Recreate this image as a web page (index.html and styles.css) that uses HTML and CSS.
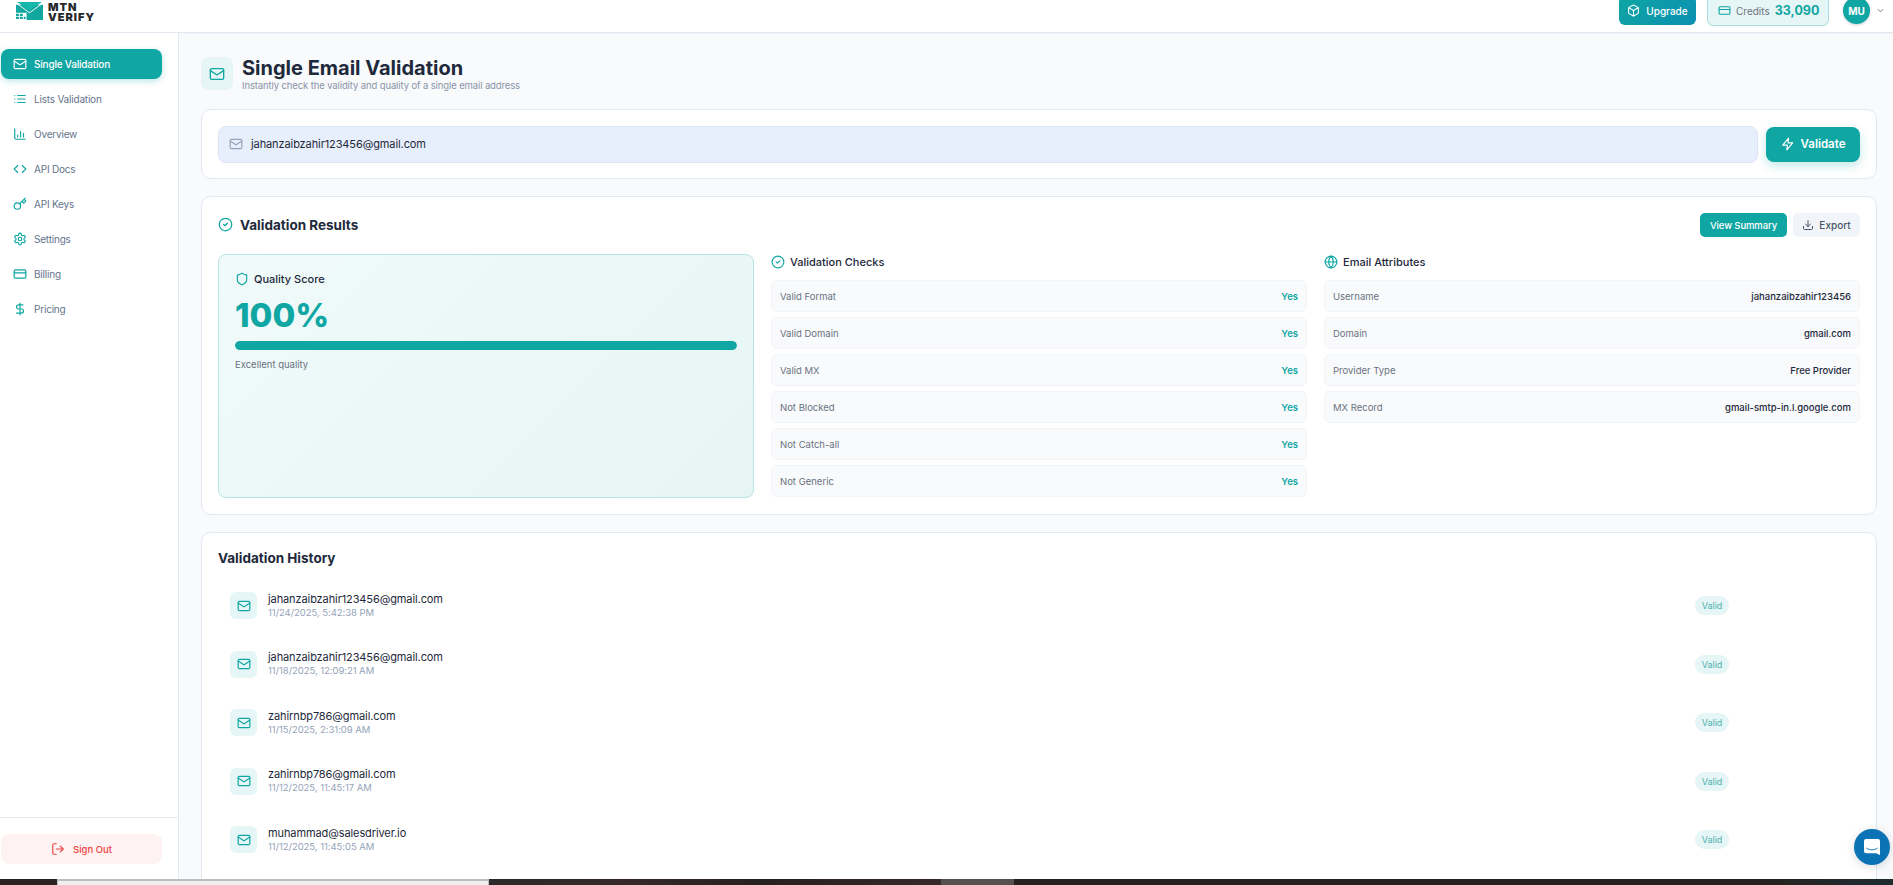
FILE: index.html
```html
<!DOCTYPE html>
<html lang="en">
<head>
    <meta charset="UTF-8">
    <meta name="viewport" content="width=device-width, initial-scale=1.0">
    <title>MTN Verify - Single Email Validation</title>
    <link rel="stylesheet" href="styles.css">
</head>
<body>
    <svg width="0" height="0" class="sprite">
        <symbol id="i-mail" viewBox="0 0 24 24"><rect x="2" y="4" width="20" height="16" rx="2"/><path d="m22 7-8.97 5.7a1.94 1.94 0 0 1-2.06 0L2 7"/></symbol>
        <symbol id="i-check" viewBox="0 0 24 24"><circle cx="12" cy="12" r="10"/><path d="m9 12 2 2 4-4"/></symbol>
        <symbol id="i-card" viewBox="0 0 24 24"><rect x="2" y="5" width="20" height="14" rx="2"/><path d="M2 10h20"/></symbol>
    </svg>

    <div class="app">
        <header class="topbar">
            <div class="logo">
                <svg class="logo-mark" viewBox="0 0 28 20" preserveAspectRatio="none">
                    <path class="logo-body" d="M0 3h28v17H11v-8H0z"/>
                    <path class="logo-flap" d="M1 0h26L14 9z"/>
                    <path class="logo-fold" d="M0 1l14 11L28 1"/>
                    <path class="logo-grid" d="M0 13h3v2.500H0zM4 13h3v2.500H4zM0 16.500h3V19H0zM4 16.500h3V19H4zM8 16.500h2V19H8z"/>
                </svg>
                <div class="logo-text">MTN<br>VERIFY</div>
            </div>
            <div class="topbar-right">
                <button class="upgrade-btn">
                    <svg class="icon icon-13" viewBox="0 0 24 24"><path d="M21 8a2 2 0 0 0-1-1.730l-7-4a2 2 0 0 0-2 0l-7 4A2 2 0 0 0 3 8v8a2 2 0 0 0 1 1.730l7 4a2 2 0 0 0 2 0l7-4A2 2 0 0 0 21 16Z"/><path d="m3.300 7 8.700 5 8.700-5"/><path d="M12 22V12"/></svg>
                    Upgrade
                </button>
                <div class="credits">
                    <svg class="icon icon-13 teal"><use href="#i-card"/></svg>
                    <span class="credits-label">Credits</span>
                    <span class="credits-value">33,090</span>
                </div>
                <div class="avatar">MU</div>
                <svg class="chevron" viewBox="0 0 24 24"><path d="m6 9 6 6 6-6"/></svg>
            </div>
        </header>

        <div class="body-row">
            <aside class="sidebar">
                <nav class="nav">
                    <a class="nav-item active"><svg class="icon icon-14"><use href="#i-mail"/></svg>Single Validation</a>
                    <a class="nav-item"><svg class="icon icon-14 teal" viewBox="0 0 24 24"><path d="M8 6h13M8 12h13M8 18h13M3 6h.01M3 12h.01M3 18h.01"/></svg>Lists Validation</a>
                    <a class="nav-item"><svg class="icon icon-14 teal" viewBox="0 0 24 24"><path d="M3 3v16a2 2 0 0 0 2 2h16M8 17v-3M13 17V8M18 17v-6"/></svg>Overview</a>
                    <a class="nav-item"><svg class="icon icon-14 teal" viewBox="0 0 24 24"><path d="m16 18 6-6-6-6M8 6l-6 6 6 6"/></svg>API Docs</a>
                    <a class="nav-item"><svg class="icon icon-14 teal" viewBox="0 0 24 24"><circle cx="7.500" cy="15.500" r="5.500"/><path d="m21 2-9.600 9.600M15.500 7.500l3 3L22 7l-3-3"/></svg>API Keys</a>
                    <a class="nav-item"><svg class="icon icon-14 teal" viewBox="0 0 24 24"><path d="M12.220 2h-.44a2 2 0 0 0-2 2v.18a2 2 0 0 1-1 1.730l-.43.250a2 2 0 0 1-2 0l-.15-.08a2 2 0 0 0-2.730.730l-.22.380a2 2 0 0 0 .730 2.730l.15.100a2 2 0 0 1 1 1.720v.510a2 2 0 0 1-1 1.740l-.15.090a2 2 0 0 0-.730 2.730l.22.380a2 2 0 0 0 2.730.730l.15-.08a2 2 0 0 1 2 0l.43.250a2 2 0 0 1 1 1.730V20a2 2 0 0 0 2 2h.44a2 2 0 0 0 2-2v-.18a2 2 0 0 1 1-1.730l.43-.250a2 2 0 0 1 2 0l.15.080a2 2 0 0 0 2.730-.730l.22-.390a2 2 0 0 0-.730-2.730l-.15-.080a2 2 0 0 1-1-1.740v-.500a2 2 0 0 1 1-1.740l.15-.090a2 2 0 0 0 .730-2.730l-.22-.380a2 2 0 0 0-2.730-.730l-.15.080a2 2 0 0 1-2 0l-.43-.250a2 2 0 0 1-1-1.730V4a2 2 0 0 0-2-2z"/><circle cx="12" cy="12" r="3"/></svg>Settings</a>
                    <a class="nav-item"><svg class="icon icon-14 teal"><use href="#i-card"/></svg>Billing</a>
                    <a class="nav-item"><svg class="icon icon-14 teal" viewBox="0 0 24 24"><path d="M12 2v20M17 5H9.500a3.500 3.500 0 0 0 0 7h5a3.500 3.500 0 0 1 0 7H6"/></svg>Pricing</a>
                </nav>
                <div class="sidebar-foot">
                    <button class="signout-btn">
                        <svg class="icon icon-14" viewBox="0 0 24 24"><path d="M9 21H5a2 2 0 0 1-2-2V5a2 2 0 0 1 2-2h4M16 17l5-5-5-5M21 12H9"/></svg>
                        Sign Out
                    </button>
                </div>
            </aside>

            <main class="main">
                <div class="page-head">
                    <div class="page-icon"><svg class="icon icon-16 teal"><use href="#i-mail"/></svg></div>
                    <div>
                        <h1>Single Email Validation</h1>
                        <p class="subtitle">Instantly check the validity and quality of a single email address</p>
                    </div>
                </div>

                <section class="card input-card">
                    <div class="email-input">
                        <svg class="icon icon-14 muted"><use href="#i-mail"/></svg>
                        <span>jahanzaibzahir123456@gmail.com</span>
                    </div>
                    <button class="validate-btn">
                        <svg class="icon icon-14" viewBox="0 0 24 24"><path d="M13 2 3 14h8l-1 8 10-12h-8z"/></svg>
                        Validate
                    </button>
                </section>

                <section class="card results-card">
                    <div class="results-head">
                        <h2><svg class="icon icon-15 teal"><use href="#i-check"/></svg>Validation Results</h2>
                        <div class="results-actions">
                            <button class="summary-btn">View Summary</button>
                            <button class="export-btn">
                                <svg class="icon icon-12" viewBox="0 0 24 24"><path d="M21 15v4a2 2 0 0 1-2 2H5a2 2 0 0 1-2-2v-4M7 10l5 5 5-5M12 15V3"/></svg>
                                Export
                            </button>
                        </div>
                    </div>
                    <div class="results-grid">
                        <div class="score-box">
                            <div class="score-label">
                                <svg class="icon icon-14 teal" viewBox="0 0 24 24"><path d="M20 13c0 5-3.500 7.500-7.660 8.950a1 1 0 0 1-.67-.010C7.500 20.500 4 18 4 13V6a1 1 0 0 1 1-1c2 0 4.500-1.200 6.240-2.720a1.170 1.170 0 0 1 1.520 0C14.510 3.810 17 5 19 5a1 1 0 0 1 1 1z"/></svg>
                                Quality Score
                            </div>
                            <div class="score-value">100%</div>
                            <div class="score-bar"><div class="score-fill" style="width: 100%"></div></div>
                            <div class="score-note">Excellent quality</div>
                        </div>
                        <div class="col">
                            <h3><svg class="icon icon-14 teal"><use href="#i-check"/></svg>Validation Checks</h3>
                            <div class="row"><span>Valid Format</span><b class="yes">Yes</b></div>
                            <div class="row"><span>Valid Domain</span><b class="yes">Yes</b></div>
                            <div class="row"><span>Valid MX</span><b class="yes">Yes</b></div>
                            <div class="row"><span>Not Blocked</span><b class="yes">Yes</b></div>
                            <div class="row"><span>Not Catch-all</span><b class="yes">Yes</b></div>
                            <div class="row"><span>Not Generic</span><b class="yes">Yes</b></div>
                        </div>
                        <div class="col">
                            <h3><svg class="icon icon-14 teal" viewBox="0 0 24 24"><circle cx="12" cy="12" r="10"/><path d="M12 2a14.500 14.500 0 0 0 0 20 14.500 14.500 0 0 0 0-20M2 12h20"/></svg>Email Attributes</h3>
                            <div class="row"><span>Username</span><b>jahanzaibzahir123456</b></div>
                            <div class="row"><span>Domain</span><b>gmail.com</b></div>
                            <div class="row"><span>Provider Type</span><b>Free Provider</b></div>
                            <div class="row"><span>MX Record</span><b>gmail-smtp-in.l.google.com</b></div>
                        </div>
                    </div>
                </section>

                <section class="card history-card">
                    <h2>Validation History</h2>
                    <div class="history-item">
                        <div class="history-icon"><svg class="icon icon-14 teal"><use href="#i-mail"/></svg></div>
                        <div class="history-text"><div class="history-email">jahanzaibzahir123456@gmail.com</div><div class="history-date">11/24/2025, 5:42:38 PM</div></div>
                        <span class="badge">Valid</span>
                    </div>
                    <div class="history-item">
                        <div class="history-icon"><svg class="icon icon-14 teal"><use href="#i-mail"/></svg></div>
                        <div class="history-text"><div class="history-email">jahanzaibzahir123456@gmail.com</div><div class="history-date">11/18/2025, 12:09:21 AM</div></div>
                        <span class="badge">Valid</span>
                    </div>
                    <div class="history-item">
                        <div class="history-icon"><svg class="icon icon-14 teal"><use href="#i-mail"/></svg></div>
                        <div class="history-text"><div class="history-email">zahirnbp786@gmail.com</div><div class="history-date">11/15/2025, 2:31:09 AM</div></div>
                        <span class="badge">Valid</span>
                    </div>
                    <div class="history-item">
                        <div class="history-icon"><svg class="icon icon-14 teal"><use href="#i-mail"/></svg></div>
                        <div class="history-text"><div class="history-email">zahirnbp786@gmail.com</div><div class="history-date">11/12/2025, 11:45:17 AM</div></div>
                        <span class="badge">Valid</span>
                    </div>
                    <div class="history-item">
                        <div class="history-icon"><svg class="icon icon-14 teal"><use href="#i-mail"/></svg></div>
                        <div class="history-text"><div class="history-email">muhammad@salesdriver.io</div><div class="history-date">11/12/2025, 11:45:05 AM</div></div>
                        <span class="badge">Valid</span>
                    </div>
                </section>
            </main>
        </div>
    </div>

    <button class="chat-btn">
        <svg viewBox="0 0 24 24"><path fill="#fff" d="M3 0h18a3 3 0 0 1 3 3v21l-6-2.500H3a3 3 0 0 1-3-3V3a3 3 0 0 1 3-3z"/><path d="M4 14c4.500 3 11.500 3 16 0" fill="none" stroke="#0b73b5" stroke-width="1.400" stroke-linecap="round"/></svg>
    </button>

    <div class="taskstrip">
        <span class="strip-a"></span>
        <span class="strip-b"></span>
        <span class="strip-c"></span>
        <span class="strip-d"></span>
        <span class="strip-e"></span>
    </div>
</body>
</html>
```

FILE: styles.css
```css
* {
    margin: 0;
    padding: 0;
    box-sizing: border-box;
}

html, body {
    height: 885px;
    overflow: hidden;
}

body {
    display: flex;
    flex-direction: column;
    background: #f8fafc;
    color: #1e293b;
    font-family: 'Inter', 'Liberation Sans', sans-serif;
}

button {
    font-family: inherit;
    border: none;
    cursor: pointer;
}

.sprite {
    position: absolute;
}

.app {
    height: 879px;
    overflow: hidden;
    display: flex;
    flex-direction: column;
}

.icon {
    fill: none;
    stroke: currentColor;
    stroke-width: 2;
    stroke-linecap: round;
    stroke-linejoin: round;
    flex-shrink: 0;
}

.icon-12 { width: 12px; height: 12px; }
.icon-13 { width: 13px; height: 13px; }
.icon-14 { width: 14px; height: 14px; }
.icon-15 { width: 15px; height: 15px; }
.icon-16 { width: 16px; height: 16px; }
.teal { color: #0fa6a3; }
.muted { color: #94a3b8; }

/* top bar, scrolled a little off the top of the window */
.topbar {
    flex-shrink: 0;
    height: 44px;
    margin-top: -11px;
    background: #fff;
    border-bottom: 1px solid #e2e8f0;
    box-shadow: 0 1px 2px rgba(15, 23, 42, 0.04);
    display: flex;
    align-items: center;
    justify-content: space-between;
    padding: 0 7px 0 16px;
}

.logo {
    display: flex;
    align-items: center;
    gap: 5px;
}

.logo-mark {
    width: 27px;
    height: 18px;
}

.logo-body { fill: #12a8a0; }
.logo-flap { fill: #14b8ad; }
.logo-fold { fill: none; stroke: #fff; stroke-width: 1; }
.logo-grid { fill: #12a8a0; }

.logo-text {
    font-size: 11px;
    line-height: 10px;
    letter-spacing: 1px;
    font-weight: 900;
    color: #26282c;
    margin-top: 3px;
}

.topbar-right {
    display: flex;
    align-items: center;
}

.upgrade-btn {
    height: 29px;
    width: 77px;
    border-radius: 6px;
    background: linear-gradient(135deg, #0fa6a3, #0b8fb0);
    color: #fff;
    font-size: 10px;
    font-weight: 500;
    display: flex;
    align-items: center;
    justify-content: center;
    gap: 6px;
    margin-right: 11px;
}

.credits {
    height: 31px;
    width: 122px;
    background: #e6f5f5;
    border: 1px solid #a8e0dd;
    border-radius: 6px;
    display: flex;
    align-items: center;
    padding-left: 10px;
    margin-right: 14px;
}

.credits-label {
    font-size: 10px;
    color: #6b7280;
    margin-left: 5px;
}

.credits-value {
    font-size: 12.500px;
    font-weight: 700;
    color: #0fa6a3;
    margin-left: 5px;
}

.avatar {
    width: 27px;
    height: 27px;
    border-radius: 50%;
    background: #0fa6a3;
    color: #fff;
    font-size: 10px;
    font-weight: 700;
    display: flex;
    align-items: center;
    justify-content: center;
    box-shadow: 0 1px 3px rgba(15, 23, 42, 0.2);
}

.chevron {
    width: 11px;
    height: 11px;
    margin-left: 5px;
    fill: none;
    stroke: #64748b;
    stroke-width: 2;
}

.body-row {
    flex: 1;
    min-height: 0;
    display: flex;
}

/* sidebar */
.sidebar {
    width: 179px;
    flex-shrink: 0;
    background: #fff;
    border-right: 1px solid #e2e8f0;
    display: flex;
    flex-direction: column;
}

.nav {
    flex: 1;
    padding: 16px 16px 0 1px;
    display: flex;
    flex-direction: column;
    gap: 5px;
}

.nav-item {
    height: 30px;
    border-radius: 8px;
    display: flex;
    align-items: center;
    gap: 7px;
    padding-left: 12px;
    font-size: 10px;
    letter-spacing: -0.2px;
    color: #64748b;
}

.nav-item.active {
    background: #0fa6a3;
    color: #fff;
    font-weight: 500;
    box-shadow: 0 2px 6px rgba(15, 166, 163, 0.3);
}

.sidebar-foot {
    border-top: 1px solid #e2e8f0;
    padding: 16px 16px 15px 1px;
}

.signout-btn {
    width: 100%;
    height: 30px;
    border-radius: 8px;
    background: #fef2f2;
    color: #ef4444;
    font-size: 9.500px;
    font-weight: 500;
    display: flex;
    align-items: center;
    justify-content: center;
    gap: 8px;
}

/* main column */
.main {
    flex: 1;
    min-width: 0;
    padding: 24px 16px 0 22px;
    overflow: hidden;
}

.page-head {
    display: flex;
    align-items: center;
    gap: 9px;
    height: 33px;
    margin-bottom: 19px;
}

.page-icon {
    width: 32px;
    height: 33px;
    border-radius: 8px;
    background: #e6f5f5;
    display: flex;
    align-items: center;
    justify-content: center;
}

h1 {
    font-size: 20px;
    line-height: 24px;
    font-weight: 700;
    color: #1e293b;
}

.subtitle {
    font-size: 9.500px;
    letter-spacing: -0.12px;
    line-height: 12px;
    color: #8a94a6;
}

.card {
    background: #fff;
    border: 1px solid #e2e8f0;
    border-radius: 10px;
    padding: 16px;
    margin-bottom: 17px;
}

.input-card {
    height: 70px;
    display: flex;
    align-items: center;
    gap: 8px;
}

.email-input {
    flex: 1;
    height: 37px;
    background: #e8effc;
    border: 1px solid #dbe4f3;
    border-radius: 8px;
    display: flex;
    align-items: center;
    gap: 8px;
    padding-left: 10px;
    font-size: 11px;
    letter-spacing: -0.1px;
    color: #1e293b;
}

.validate-btn {
    width: 94px;
    height: 35px;
    border-radius: 8px;
    background: #0fa6a3;
    color: #fff;
    font-size: 11.500px;
    font-weight: 600;
    display: flex;
    align-items: center;
    justify-content: center;
    gap: 6px;
    box-shadow: 0 4px 10px rgba(15, 166, 163, 0.25);
}

.results-card {
    height: 319px;
}

.results-head {
    display: flex;
    align-items: center;
    justify-content: space-between;
    height: 24px;
    margin-bottom: 17px;
}

.results-head h2 {
    margin-top: -1px;
}

h2 {
    display: flex;
    align-items: center;
    gap: 7px;
    font-size: 13.500px;
    font-weight: 700;
    color: #1e293b;
}

.results-actions {
    display: flex;
    gap: 6px;
}

.summary-btn, .export-btn {
    height: 24px;
    border-radius: 5px;
    font-size: 10px;
    font-weight: 500;
}

.summary-btn {
    width: 87px;
    background: #0fa6a3;
    color: #fff;
    font-size: 9.500px;
    letter-spacing: -0.1px;
}

.export-btn {
    width: 67px;
    background: #f1f5f9;
    color: #475569;
    display: flex;
    align-items: center;
    justify-content: center;
    gap: 5px;
}

.results-grid {
    display: grid;
    grid-template-columns: repeat(3, 1fr);
    gap: 17px;
}

.score-box {
    height: 244px;
    border: 1px solid #b8e4e2;
    border-radius: 8px;
    background: linear-gradient(135deg, #f0fafa, #e6f5f4);
    padding: 16px;
}

.score-label {
    display: flex;
    align-items: center;
    gap: 5px;
    font-size: 11px;
    font-weight: 500;
    height: 16px;
}

.score-value {
    font-size: 33px;
    line-height: 40px;
    font-weight: 800;
    color: #0fa6a3;
    margin-top: 8px;
}

.score-bar {
    height: 9px;
    border-radius: 5px;
    background: #d5eeec;
    margin-top: 6px;
    overflow: hidden;
}

.score-fill {
    height: 100%;
    background: #0fa6a3;
    border-radius: 5px;
}

.score-note {
    font-size: 9.500px;
    color: #6b7280;
    margin-top: 9px;
}

.col {
    display: flex;
    flex-direction: column;
    gap: 5px;
}

h3 {
    display: flex;
    align-items: center;
    gap: 5px;
    height: 16px;
    font-size: 11px;
    font-weight: 500;
    color: #1e293b;
    margin-bottom: 5px;
}

.row {
    height: 32px;
    flex-shrink: 0;
    background: #f8fafc;
    border: 1px solid #f1f5f9;
    border-radius: 6px;
    padding: 0 8px;
    display: flex;
    align-items: center;
    justify-content: space-between;
    font-size: 9.500px;
    color: #6b7280;
}

.row b {
    font-weight: 500;
    color: #1e293b;
}

.row b.yes {
    font-weight: 600;
    color: #0fa6a3;
}

.history-card {
    margin-bottom: 0;
    height: 500px;
}

.history-card h2 {
    margin-top: 1px;
    margin-bottom: 26px;
}

.history-item {
    height: 58.500px;
    padding: 0 0 31px 12px;
    display: flex;
    align-items: center;
    gap: 11px;
}

.history-icon {
    width: 27px;
    height: 27px;
    border-radius: 6px;
    background: #e6f5f5;
    display: flex;
    align-items: center;
    justify-content: center;
}

.history-text {
    flex: 1;
}

.history-email {
    font-size: 11px;
    letter-spacing: -0.1px;
    line-height: 14px;
    color: #1e293b;
}

.history-date {
    font-size: 9.500px;
    letter-spacing: -0.05px;
    line-height: 14px;
    color: #94a3b8;
}

.badge {
    width: 34px;
    height: 19px;
    border-radius: 10px;
    background: #e6f5f5;
    color: #4fb3b0;
    font-size: 9px;
    display: flex;
    align-items: center;
    justify-content: center;
    margin-right: 131px;
}

.chat-btn {
    position: fixed;
    left: 1854px;
    top: 829px;
    width: 36px;
    height: 36px;
    border-radius: 50%;
    background: #0b73b5;
    display: flex;
    align-items: center;
    justify-content: center;
    box-shadow: 0 2px 10px rgba(15, 23, 42, 0.15);
}

.chat-btn svg {
    width: 16px;
    height: 18px;
}

/* slice of the window behind the browser */
.taskstrip {
    height: 6px;
    flex-shrink: 0;
    display: flex;
}

.taskstrip span { display: block; }
.strip-a { width: 57px; background: #2a2320; }
.strip-b { width: 432px; background: #efefef; border-top: 2px solid #bdbdbd; border-left: 1px solid #bdbdbd; border-right: 1px solid #bdbdbd; }
.strip-c { width: 452px; background: linear-gradient(90deg, #2a2a28, #36282a 30%, #27211e 60%, #36282a); }
.strip-d { width: 73px; background: #57514e; }
.strip-e { flex: 1; background: linear-gradient(90deg, #26221f 85%, #1e2c30); }
```
